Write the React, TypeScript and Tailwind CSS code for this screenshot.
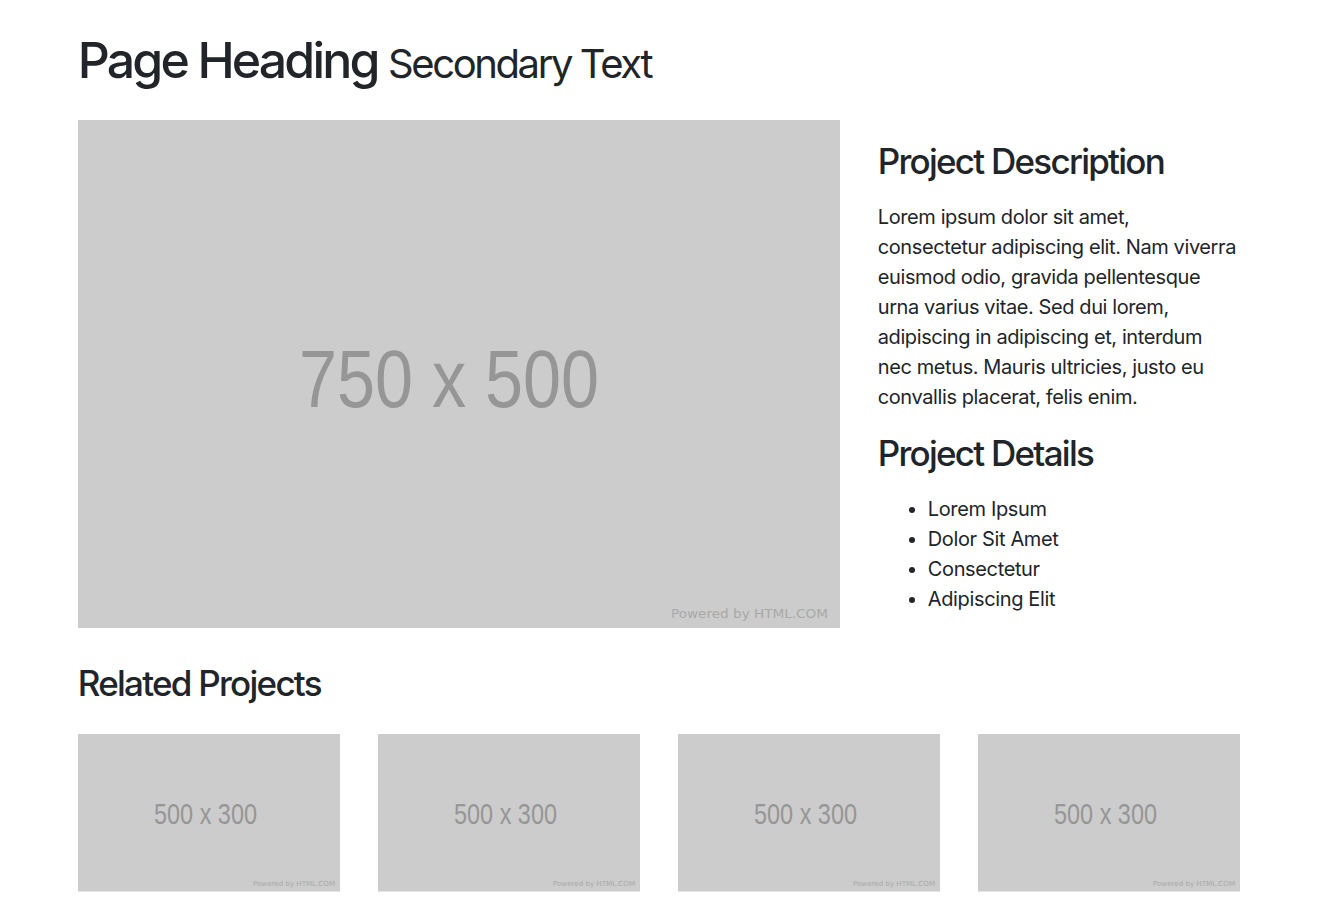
import React from "react";

const FONT = { fontFamily: "Inter, 'Noto Sans', 'Liberation Sans', sans-serif" };

type PlaceholderProps = {
  w: number;
  h: number;
  label: string;
  labelX: number;
  labelY: number;
  labelSize: number;
  labelLen: number;
  creditX: number;
  creditY: number;
  creditSize: number;
  creditLen: number;
};

function Placeholder(p: PlaceholderProps) {
  return (
    <svg
      viewBox={`0 0 ${p.w} ${p.h}`}
      width={p.w}
      height={p.h}
      className="block w-full h-auto"
    >
      <rect width={p.w} height={p.h} fill="#cccccc" />
      <text
        x={p.labelX}
        y={p.labelY}
        fontSize={p.labelSize}
        textLength={p.labelLen}
        lengthAdjust="spacingAndGlyphs"
        fill="#969696"
        fontFamily="'Liberation Sans', Arial, sans-serif"
      >
        {p.label}
      </text>
      <text
        x={p.creditX}
        y={p.creditY}
        fontSize={p.creditSize}
        textLength={p.creditLen}
        lengthAdjust="spacingAndGlyphs"
        fill="#a8a8a8"
        fontFamily="'DejaVu Sans', sans-serif"
      >
        Powered by HTML.COM
      </text>
    </svg>
  );
}

const DETAILS = ["Lorem Ipsum", "Dolor Sit Amet", "Consectetur", "Adipiscing Elit"];

export default function App() {
  return (
    <div className="min-h-screen bg-white text-[#212529]" style={FONT}>
      <div className="mx-auto w-full max-w-[1200px] px-[18.75px]">
        {/* Heading */}
        <h1 className="my-[30px] text-[50px] leading-[1.2] font-medium tracking-[-0.057em]">
          Page Heading{" "}
          <small className="text-[40px] font-normal tracking-[-0.06em]">Secondary Text</small>
        </h1>

        {/* Item row */}
        <div className="flex gap-[37.5px]">
          <div className="w-[762.5px] shrink-0">
            <Placeholder
              w={762.5}
              h={508}
              label="750 x 500"
              labelX={221}
              labelY={287}
              labelSize={82}
              labelLen={300}
              creditX={593}
              creditY={498}
              creditSize={13}
              creditLen={157}
            />
          </div>
          <div className="flex-1 pb-[18px]">
            <h3 className="mt-[20px] mb-[20px] text-[35px] leading-[1.2] font-medium tracking-[-0.05em]">
              Project Description
            </h3>
            <p className="mb-[20px] text-[20px] leading-[30px] tracking-[-0.02em]">
              Lorem ipsum dolor sit amet, consectetur adipiscing elit. Nam viverra euismod odio,
              gravida pellentesque urna varius vitae. Sed dui lorem, adipiscing in adipiscing et,
              interdum nec metus. Mauris ultricies, justo eu convallis placerat, felis enim.
            </p>
            <h3 className="mt-[20px] mb-[20px] text-[35px] leading-[1.2] font-medium tracking-[-0.05em]">
              Project Details
            </h3>
            <ul className="list-disc pl-[50px] text-[20px] leading-[30px] tracking-[-0.018em]">
              {DETAILS.map((d) => (
                <li key={d}>{d}</li>
              ))}
            </ul>
          </div>
        </div>

        {/* Related projects */}
        <h3 className="my-[30px] text-[35px] leading-[1.2] font-medium tracking-[-0.05em]">
          Related Projects
        </h3>
        <div className="grid grid-cols-4 gap-x-[37.5px]">
          {[0, 1, 2, 3].map((i) => (
            <a key={i} href="#" className="mb-[30px] block">
              <Placeholder
                w={262.5}
                h={157.5}
                label="500 x 300"
                labelX={76}
                labelY={90}
                labelSize={29.5}
                labelLen={103}
                creditX={175}
                creditY={152}
                creditSize={7}
                creditLen={82}
              />
            </a>
          ))}
        </div>
      </div>
    </div>
  );
}
